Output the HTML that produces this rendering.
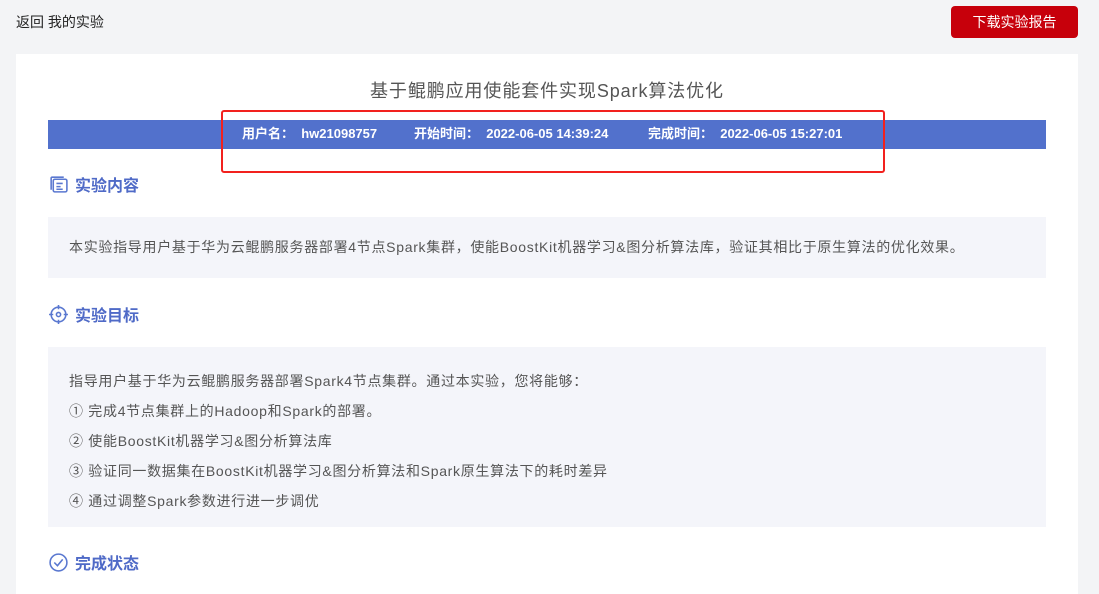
<!DOCTYPE html>
<html><head><meta charset="utf-8"><style>
*{margin:0;padding:0;box-sizing:border-box}
body{width:1099px;height:583px;overflow:hidden;background:#f3f4f6;font-family:"Liberation Sans","Noto Sans CJK SC",sans-serif;position:relative;color:#333}
.a{position:absolute}
.back{left:16px;top:12px;font-size:14px;color:#222}
.btn{left:951px;top:6px;width:127px;height:32px;background:#c7000b;border-radius:4px;color:#fff;font-size:14px;text-align:center;line-height:32px}
.card{left:16px;top:54px;width:1062px;height:540px;background:#fff}
.title{left:16px;width:1062px;top:77px;text-align:center;font-size:18px;color:#555;letter-spacing:0.9px}
.bar{left:48px;top:120px;width:998px;height:29px;background:#5271cc;color:#fff;font-size:13px;line-height:28px;font-weight:600}
.bar span{position:absolute;top:0;white-space:nowrap}
.red{left:221px;top:110px;width:664px;height:63px;border:2.5px solid #f2211e;border-radius:3px}
.h{left:48px;font-size:16px;font-weight:bold;color:#4f6ac7;display:flex;align-items:center;gap:6px}
.box{left:48px;width:998px;background:#f4f5fa;font-size:14px;color:#555;letter-spacing:0.7px}
</style></head><body>
<div class="a back">返回 我的实验</div>
<div class="a btn">下载实验报告</div>
<div class="a card"></div>
<div class="a title">基于鲲鹏应用使能套件实现Spark算法优化</div>
<div class="a bar"><span style="left:194px">用户名：&nbsp; hw21098757</span><span style="left:366px">开始时间：&nbsp; 2022-06-05 14:39:24</span><span style="left:600px">完成时间：&nbsp; 2022-06-05 15:27:01</span></div>
<div class="a red"></div>
<div class="a h" style="top:172px"><svg width="21" height="21" viewBox="0 0 20 20" fill="none" stroke="#5a78d0" stroke-width="1.5"><path d="M3 15V4a1 1 0 0 1 1-1h11"/><rect x="5" y="5" width="13" height="12" rx="1.5"/><path d="M8 9h6M8 12h4M8 14.5h6"/></svg>实验内容</div>
<div class="a box" style="top:217px;height:61px;line-height:61px;padding-left:21px">本实验指导用户基于华为云鲲鹏服务器部署4节点Spark集群，使能BoostKit机器学习&amp;图分析算法库，验证其相比于原生算法的优化效果。</div>
<div class="a h" style="top:302px"><svg width="21" height="21" viewBox="0 0 20 20" fill="none" stroke="#5a78d0" stroke-width="1.5"><circle cx="10" cy="10" r="7"/><circle cx="10" cy="10" r="2"/><path d="M10 1v4M10 15v4M1 10h4M15 10h4"/></svg>实验目标</div>
<div class="a box" style="top:347px;height:180px;padding:19px 0 0 21px;line-height:30px">指导用户基于华为云鲲鹏服务器部署Spark4节点集群。通过本实验，您将能够：<br>① 完成4节点集群上的Hadoop和Spark的部署。<br>② 使能BoostKit机器学习&amp;图分析算法库<br>③ 验证同一数据集在BoostKit机器学习&amp;图分析算法和Spark原生算法下的耗时差异<br>④ 通过调整Spark参数进行进一步调优</div>
<div class="a h" style="top:550px"><svg width="21" height="21" viewBox="0 0 20 20" fill="none" stroke="#5a78d0" stroke-width="1.5"><circle cx="10" cy="10" r="8"/><path d="M6 10l3 3 5-6"/></svg>完成状态</div>
</body></html>
